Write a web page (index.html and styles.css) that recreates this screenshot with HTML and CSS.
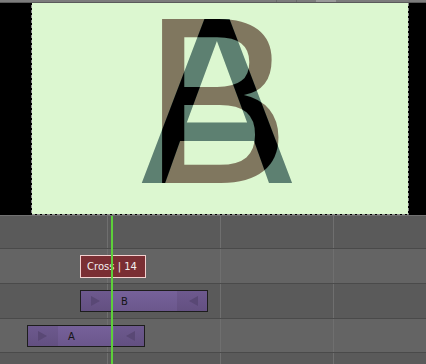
FILE: index.html
```html
<!DOCTYPE html>
<html>
<head>
<meta charset="utf-8">
<link rel="stylesheet" href="styles.css">
</head>
<body>
<div class="app">
  <div class="topbar"><span class="seg s1"></span><span class="seg s2"></span><span class="thumb"></span></div>
  <div class="preview">
    <svg class="canvas" width="426" height="212" viewBox="0 3 426 212" xmlns="http://www.w3.org/2000/svg">
      <defs>
        <clipPath id="clipB">
          <text class="glyph" x="140" y="183">B</text>
        </clipPath>
      </defs>
      <rect class="void" x="0" y="0" width="426" height="220"></rect>
      <rect class="frame" x="32" y="0" width="376" height="214"></rect>
      <text class="glyph glyph-b" x="140" y="183">B</text>
      <text class="glyph glyph-a" x="140" y="183">A</text>
      <text class="glyph glyph-ab" x="140" y="183" clip-path="url(#clipB)">A</text>
      <path class="frame-edge" d="M31.5 0 V214.5 H408.5 V0"></path>
    </svg>
  </div>
  <div class="timeline">
    <div class="row dark first"></div>
    <div class="row light">
      <div class="strip cross" style="left:80px;width:66px">Cross | 14</div>
    </div>
    <div class="row dark">
      <div class="strip media" style="left:80px;width:128px">
        <span class="handle hl"><span class="tri tri-r"></span></span>
        <span class="label">B</span>
        <span class="handle hr"><span class="tri tri-l"></span></span>
      </div>
    </div>
    <div class="row light short">
      <div class="strip media" style="left:27px;width:118px">
        <span class="handle hl"><span class="tri tri-r"></span></span>
        <span class="label">A</span>
        <span class="handle hr"><span class="tri tri-l"></span></span>
      </div>
    </div>
    <div class="row dark last"></div>
    <div class="playhead"></div>
  </div>
</div>
</body>
</html>
```

FILE: styles.css
```css
* { box-sizing: border-box; }
html, body { margin: 0; padding: 0; }
body {
  width: 426px;
  height: 364px;
  overflow: hidden;
  background: #000;
  font-family: "DejaVu Sans", sans-serif;
}
.app {
  width: 426px;
  height: 364px;
  display: flex;
  flex-direction: column;
}
.topbar {
  height: 3px;
  flex: none;
  background: #7c7c7c;
  position: relative;
  border-bottom: 1px solid #5a5a5a;
}
.topbar .seg {
  position: absolute;
  top: 0;
  width: 1px;
  height: 2px;
  background: #6a6a6a;
}
.topbar .s1 { left: 276px; }
.topbar .s2 { left: 296px; }
.topbar .thumb {
  position: absolute;
  top: 0;
  left: 316px;
  width: 20px;
  height: 2px;
  background: #9a9a9a;
}
.preview {
  height: 212px;
  flex: none;
  overflow: hidden;
  background: #000;
}
.canvas { display: block; }
.void { fill: #000; }
.frame { fill: #dcf7d0; }
.frame-edge {
  fill: none;
  stroke: #8c8c8c;
  stroke-width: 1;
  stroke-dasharray: 3 2;
}
.glyph {
  font-family: "DejaVu Sans", sans-serif;
  font-size: 225px;
}
.glyph-b { fill: #80775f; }
.glyph-a { fill: #5d8071; }
.glyph-ab { fill: #000; }

.timeline {
  flex: 1;
  position: relative;
  border-top: 1px solid #717171;
  display: flex;
  flex-direction: column;
  background: #5a5a5a;
}
.row {
  position: relative;
  height: 35px;
  flex: none;
  border-bottom: 1px solid #4a4a4a;
  background-image: repeating-linear-gradient(to right, transparent 0 112px, #6f6f6f 112px 113px);
  background-position: -5px 0;
}
.row.first { height: 33px; }
.row.short { height: 34px; }
.row.last { flex: 1; border-bottom: none; }
.row.dark { background-color: #5a5a5a; }
.row.light { background-color: #646464; }

.strip {
  position: absolute;
  top: 6px;
  height: 23px;
  display: flex;
  align-items: center;
  font-size: 10px;
  white-space: nowrap;
  overflow: hidden;
}
.row.dark .strip, .row.short .strip { height: 22px; }
.cross {
  background: #7a2e33;
  border: 1px solid #f3d0cf;
  color: #f2eeee;
  justify-content: center;
  padding-right: 2px;
}
.media {
  border: 1px solid #1d1d1d;
  background: linear-gradient(to bottom, #76619a, #6b578c);
  color: #151515;
}
.handle {
  width: 30px;
  flex: none;
  align-self: stretch;
  display: flex;
  align-items: center;
  background: linear-gradient(to bottom, #6d598e, #635081);
}
.hl { padding-left: 10px; }
.hr { justify-content: flex-end; padding-right: 9px; }
.label {
  flex: 1;
  padding-left: 10px;
  padding-top: 1px;
}
.tri {
  width: 0;
  height: 0;
  border-top: 5px solid transparent;
  border-bottom: 5px solid transparent;
}
.tri-r { border-left: 9px solid #594875; }
.tri-l { border-right: 9px solid #594875; }

.playhead {
  position: absolute;
  left: 111px;
  top: 0;
  bottom: 0;
  width: 2px;
  background: #5dcf3a;
}
```
